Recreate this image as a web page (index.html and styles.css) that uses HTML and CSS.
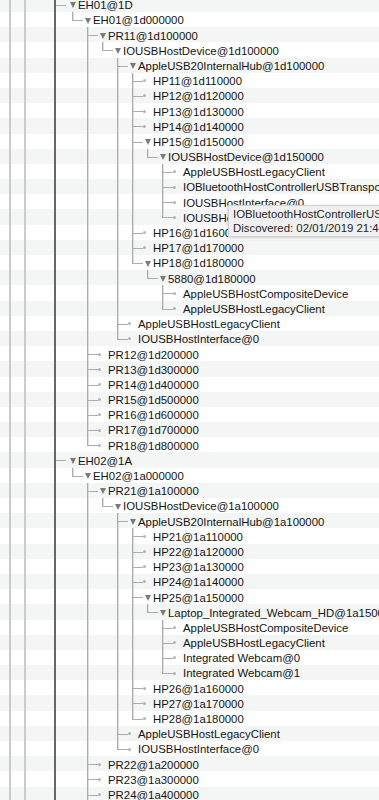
FILE: index.html
```html
<!DOCTYPE html>
<html lang="en">

<head>
    <meta charset="UTF-8">
    <meta name="viewport" content="width=device-width, initial-scale=1.0">
    <title>IORegistry - USB</title>
    <link rel="stylesheet" href="styles.css">
</head>

<body>
    <div class="outline">
        <div class="guide g1">
            <div class="guide g2">
                <div class="guide g3">
                    <ul class="tree">
                        <li class="open">
                            <div class="row alt">EH01@1D</div>
                            <ul>
                                <li class="open last">
                                    <div class="row">EH01@1d000000</div>
                                    <ul>
                                        <li class="open">
                                            <div class="row alt">PR11@1d100000</div>
                                            <ul>
                                                <li class="open last">
                                                    <div class="row">IOUSBHostDevice@1d100000</div>
                                                    <ul>
                                                        <li class="open">
                                                            <div class="row alt">AppleUSB20InternalHub@1d100000</div>
                                                            <ul>
                                                                <li><div class="row">HP11@1d110000</div></li>
                                                                <li><div class="row alt">HP12@1d120000</div></li>
                                                                <li><div class="row">HP13@1d130000</div></li>
                                                                <li><div class="row alt">HP14@1d140000</div></li>
                                                                <li class="open">
                                                                    <div class="row">HP15@1d150000</div>
                                                                    <ul>
                                                                        <li class="open last">
                                                                            <div class="row alt">IOUSBHostDevice@1d150000</div>
                                                                            <ul>
                                                                                <li><div class="row">AppleUSBHostLegacyClient</div></li>
                                                                                <li><div class="row alt">IOBluetoothHostControllerUSBTransport</div></li>
                                                                                <li><div class="row">IOUSBHostInterface@0</div></li>
                                                                                <li class="last"><div class="row alt">IOUSBHostInterface@1</div></li>
                                                                            </ul>
                                                                        </li>
                                                                    </ul>
                                                                </li>
                                                                <li><div class="row">HP16@1d160000</div></li>
                                                                <li><div class="row alt">HP17@1d170000</div></li>
                                                                <li class="open last">
                                                                    <div class="row">HP18@1d180000</div>
                                                                    <ul>
                                                                        <li class="open last">
                                                                            <div class="row alt">5880@1d180000</div>
                                                                            <ul>
                                                                                <li><div class="row">AppleUSBHostCompositeDevice</div></li>
                                                                                <li class="last"><div class="row alt">AppleUSBHostLegacyClient</div></li>
                                                                            </ul>
                                                                        </li>
                                                                    </ul>
                                                                </li>
                                                            </ul>
                                                        </li>
                                                        <li><div class="row">AppleUSBHostLegacyClient</div></li>
                                                        <li class="last"><div class="row alt">IOUSBHostInterface@0</div></li>
                                                    </ul>
                                                </li>
                                            </ul>
                                        </li>
                                        <li><div class="row">PR12@1d200000</div></li>
                                        <li><div class="row alt">PR13@1d300000</div></li>
                                        <li><div class="row">PR14@1d400000</div></li>
                                        <li><div class="row alt">PR15@1d500000</div></li>
                                        <li><div class="row">PR16@1d600000</div></li>
                                        <li><div class="row alt">PR17@1d700000</div></li>
                                        <li class="last"><div class="row">PR18@1d800000</div></li>
                                    </ul>
                                </li>
                            </ul>
                        </li>
                        <li class="open">
                            <div class="row alt">EH02@1A</div>
                            <ul>
                                <li class="open last">
                                    <div class="row">EH02@1a000000</div>
                                    <ul>
                                        <li class="open">
                                            <div class="row alt">PR21@1a100000</div>
                                            <ul>
                                                <li class="open last">
                                                    <div class="row">IOUSBHostDevice@1a100000</div>
                                                    <ul>
                                                        <li class="open">
                                                            <div class="row alt">AppleUSB20InternalHub@1a100000</div>
                                                            <ul>
                                                                <li><div class="row">HP21@1a110000</div></li>
                                                                <li><div class="row alt">HP22@1a120000</div></li>
                                                                <li><div class="row">HP23@1a130000</div></li>
                                                                <li><div class="row alt">HP24@1a140000</div></li>
                                                                <li class="open">
                                                                    <div class="row">HP25@1a150000</div>
                                                                    <ul>
                                                                        <li class="open last">
                                                                            <div class="row alt">Laptop_Integrated_Webcam_HD@1a150000</div>
                                                                            <ul>
                                                                                <li><div class="row">AppleUSBHostCompositeDevice</div></li>
                                                                                <li><div class="row alt">AppleUSBHostLegacyClient</div></li>
                                                                                <li><div class="row">Integrated Webcam@0</div></li>
                                                                                <li class="last"><div class="row alt">Integrated Webcam@1</div></li>
                                                                            </ul>
                                                                        </li>
                                                                    </ul>
                                                                </li>
                                                                <li><div class="row">HP26@1a160000</div></li>
                                                                <li><div class="row alt">HP27@1a170000</div></li>
                                                                <li class="last"><div class="row">HP28@1a180000</div></li>
                                                            </ul>
                                                        </li>
                                                        <li><div class="row alt">AppleUSBHostLegacyClient</div></li>
                                                        <li class="last"><div class="row">IOUSBHostInterface@0</div></li>
                                                    </ul>
                                                </li>
                                            </ul>
                                        </li>
                                        <li><div class="row alt">PR22@1a200000</div></li>
                                        <li><div class="row">PR23@1a300000</div></li>
                                        <li><div class="row alt">PR24@1a400000</div></li>
                                        <li><div class="row">PR25@1a500000</div></li>
                                    </ul>
                                </li>
                            </ul>
                        </li>
                    </ul>
                </div>
            </div>
        </div>
    </div>

    <div class="tooltip">
        <div>IOBluetoothHostControllerUSBTransport</div>
        <div>Discovered: 02/01/2019 21:45:07</div>
    </div>
</body>

</html>
```

FILE: styles.css
```css
html,
body {
    margin: 0;
    padding: 0;
    height: 100%;
    overflow: hidden;
}

body {
    position: relative;
    font-family: "Liberation Sans", Arial, sans-serif;
    font-size: 11.4px;
    color: #141414;
    background: #fff;
}

/* first row starts a bit above the window */
.outline {
    margin-top: -3.2px;
}

/* ancestor lines of nodes scrolled out of view */
.guide {
    border-left: 2px solid #cbcbcb;
}

.g1 {
    margin-left: 9px;
}

.g2 {
    margin-left: 13px;
}

.g3 {
    margin-left: 28px;
    border-left-color: #676767;
}

.tree,
.tree ul {
    margin: 0;
    list-style: none;
}

.tree {
    padding: 0 0 0 1px;
}

.tree ul {
    padding-left: 15px;
}

.tree li {
    position: relative;
}

/* vertical connector */
.tree li li::before {
    content: '';
    position: absolute;
    left: 0;
    top: 0;
    bottom: 0;
    width: 1px;
    background: #acacac;
    box-shadow: 1px 0 0 #dedede;
}

.tree li li.last::before {
    bottom: auto;
    height: 8.5px;
}

/* horizontal connector */
.tree li::after {
    content: '';
    position: absolute;
    left: 0;
    top: 8px;
    width: 11px;
    height: 1px;
    background: #acacac;
}

.tree > li::after {
    left: -1px;
    width: 10px;
}

.row {
    position: relative;
    box-sizing: border-box;
    height: 15.2px;
    line-height: 15.2px;
    padding: 1.4px 0 0 21px;
    white-space: nowrap;
}

/* zebra stripe across the whole width */
.row.alt::before {
    content: '';
    position: absolute;
    z-index: -1;
    top: 0;
    bottom: 0;
    left: -400px;
    right: -400px;
    background: #f4f5f5;
}

/* disclosure triangle */
.open > .row::after {
    content: '';
    position: absolute;
    left: 12.5px;
    top: 5.5px;
    border-left: 3.5px solid transparent;
    border-right: 3.5px solid transparent;
    border-top: 6px solid #7a7a7a;
}

/* leaf marker */
.tree li:not(.open) > .row::after {
    content: '';
    position: absolute;
    left: 10.5px;
    top: 6.5px;
    width: 3px;
    height: 3px;
    border-radius: 50%;
    background: #b4b4b4;
}

.tooltip {
    position: absolute;
    left: 228px;
    top: 205px;
    padding: 1.3px 8px 1px 4px;
    line-height: 14px;
    white-space: nowrap;
    color: #262626;
    background: #f0f0f0;
    border: 1px solid #d2d2d2;
    box-shadow: 0 1px 3px rgba(0, 0, 0, 0.22);
}
```
